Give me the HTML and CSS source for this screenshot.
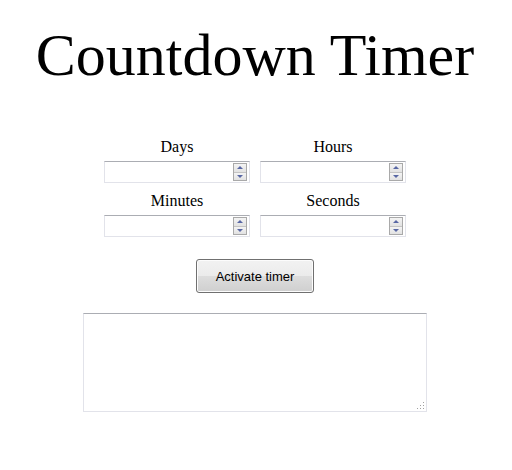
FILE: index.html
```html
<!DOCTYPE html>
<html>
<head>
  <meta charset="UTF-8">
  <link rel="stylesheet" href="styles.css">
</head>
<body>
  <h1 id="title">Countdown Timer</h1>
  <div id="fields">
    <div class="field">
      <label for="days">Days</label>
      <div class="num-box">
        <input id="days" type="number" min="0">
        <span class="spin"><span class="spin-up"></span><span class="spin-down"></span></span>
      </div>
    </div>
    <div class="field">
      <label for="hours">Hours</label>
      <div class="num-box">
        <input id="hours" type="number" min="0">
        <span class="spin"><span class="spin-up"></span><span class="spin-down"></span></span>
      </div>
    </div>
    <div class="field">
      <label for="minutes">Minutes</label>
      <div class="num-box">
        <input id="minutes" type="number" min="0">
        <span class="spin"><span class="spin-up"></span><span class="spin-down"></span></span>
      </div>
    </div>
    <div class="field">
      <label for="seconds">Seconds</label>
      <div class="num-box">
        <input id="seconds" type="number" min="0">
        <span class="spin"><span class="spin-up"></span><span class="spin-down"></span></span>
      </div>
    </div>
  </div>
  <div id="actions">
    <button id="activate">Activate timer</button>
  </div>
  <div id="output-wrap">
    <textarea id="output"></textarea>
    <svg class="grip" width="9" height="9" viewBox="0 0 9 9">
      <rect x="7" y="1" width="1" height="1"/>
      <rect x="4" y="4" width="1" height="1"/>
      <rect x="7" y="4" width="1" height="1"/>
      <rect x="1" y="7" width="1" height="1"/>
      <rect x="4" y="7" width="1" height="1"/>
      <rect x="7" y="7" width="1" height="1"/>
    </svg>
  </div>
</body>
</html>
```

FILE: styles.css
```css
* { box-sizing: border-box; }
body {
  margin: 0;
  padding-right: 2px;
  font-family: "Liberation Serif", "Times New Roman", serif;
  color: #000;
  background: #fff;
}
#title {
  margin: 22px 0 0;
  font-size: 60px;
  font-weight: normal;
  text-align: center;
  line-height: 66px;
}
#fields {
  display: grid;
  grid-template-columns: 146px 146px;
  column-gap: 10px;
  row-gap: 9px;
  justify-content: center;
  margin-top: 50px;
}
.field {
  display: flex;
  flex-direction: column;
  align-items: stretch;
}
.field label {
  font-size: 16px;
  line-height: 18px;
  text-align: center;
  margin-bottom: 5px;
}
.num-box {
  display: flex;
  height: 22px;
  border: 1px solid #e2e3ea;
  border-top-color: #abadb3;
  background: #fff;
  padding: 1px 2px 1px 1px;
}
.num-box input {
  flex: 1;
  min-width: 0;
  border: none;
  outline: none;
  padding: 0 2px;
  font: 13px "Liberation Sans", Arial, sans-serif;
  -moz-appearance: textfield;
}
.num-box input::-webkit-inner-spin-button,
.num-box input::-webkit-outer-spin-button {
  -webkit-appearance: none;
  margin: 0;
}
.spin {
  width: 14px;
  display: flex;
  flex-direction: column;
  border: 1px solid #a9a9a9;
}
.spin-up, .spin-down {
  flex: 1;
  display: flex;
  align-items: center;
  justify-content: center;
  background: linear-gradient(#f4f4f4, #e2e2e2);
}
.spin-up { border-bottom: 1px solid #c4c4c4; }
.spin-up::after {
  content: "";
  border-left: 3px solid transparent;
  border-right: 3px solid transparent;
  border-bottom: 3px solid #5867a4;
}
.spin-down::after {
  content: "";
  border-left: 3px solid transparent;
  border-right: 3px solid transparent;
  border-top: 3px solid #5867a4;
}
#actions {
  display: flex;
  justify-content: center;
  margin-top: 22px;
}
#activate {
  width: 118px;
  height: 34px;
  font: 13px "Liberation Sans", Arial, sans-serif;
  color: #000;
  border: 1px solid #707070;
  border-radius: 3px;
  background: linear-gradient(#f2f2f2 0%, #ebebeb 50%, #dddddd 51%, #cfcfcf 100%);
  box-shadow: inset 0 0 0 1px #fcfcfc;
  cursor: pointer;
}
#output-wrap {
  position: relative;
  width: 344px;
  height: 99px;
  margin: 20px auto 0;
}
#output {
  display: block;
  width: 100%;
  height: 100%;
  resize: none;
  border: 1px solid #e2e3ea;
  border-top-color: #abadb3;
  outline: none;
  font: 13px "Liberation Mono", monospace;
}
.grip {
  position: absolute;
  right: 2px;
  bottom: 2px;
  fill: #a0a0a0;
}
```
